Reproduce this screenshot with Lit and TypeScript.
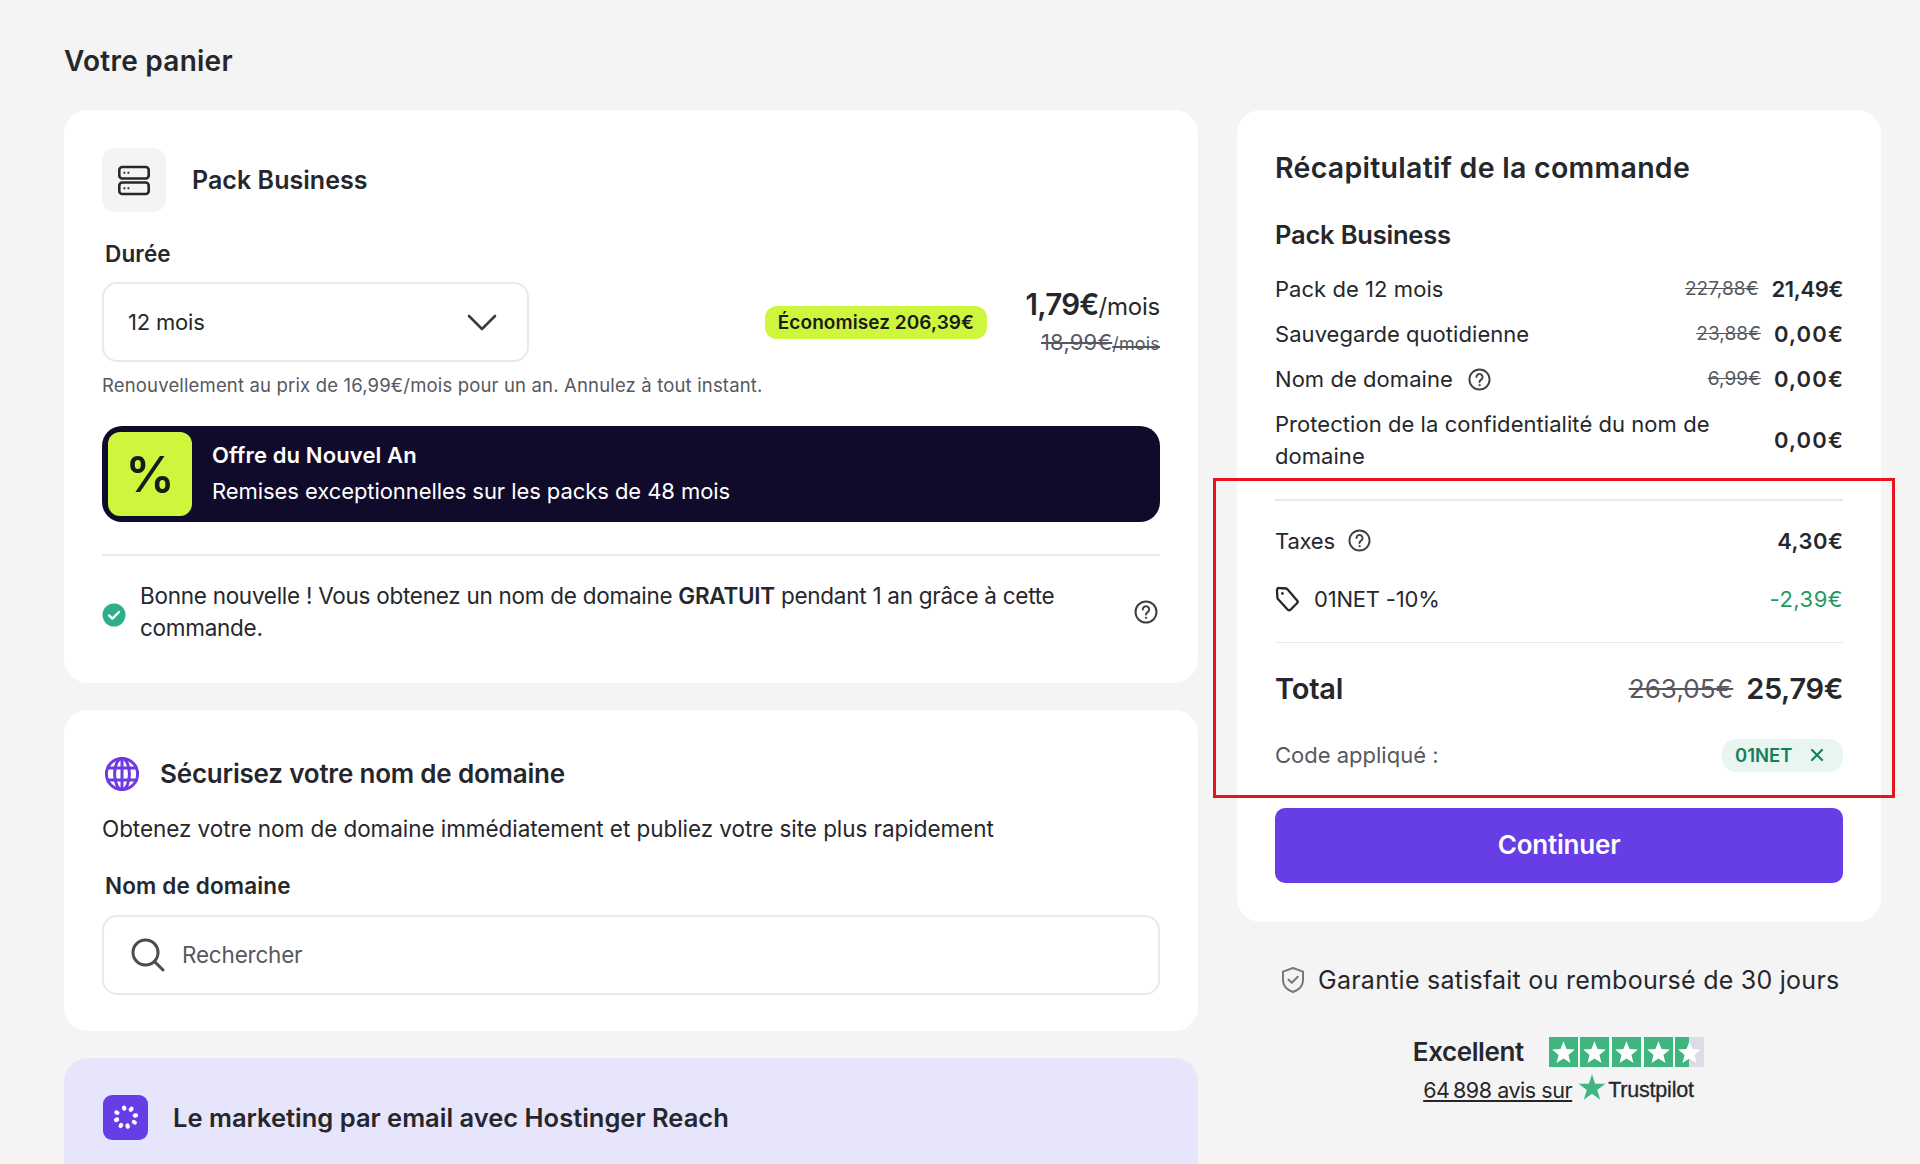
import { LitElement, html, css, svg } from "lit";
import { customElement } from "lit/decorators.js";

const help = (size: number) => html`<svg class="help" width=${size} height=${size} viewBox="0 0 24 24" fill="none" stroke="currentColor" stroke-width="2" stroke-linecap="round">
  <circle cx="12" cy="12" r="10.5"></circle>
  <path d="M8.8 9.4a3.2 3.2 0 1 1 4.9 2.7c-1 .7-1.7 1.2-1.7 2.5"></path>
  <circle cx="12" cy="17.8" r=".7" fill="currentColor" stroke-width="1"></circle>
</svg>`;

const star = svg`<path d="M12 3.2l2.5 6.4 6.9.4-5.3 4.4 1.7 6.7-5.8-3.7-5.8 3.7 1.7-6.7L2.6 10l6.9-.4z" fill="#fff"></path>`;

@customElement("app-root")
export class AppRoot extends LitElement {
  static styles = css`
    :host {
      display: block;
      position: relative;
      height: 1164px;
      overflow: hidden;
      background: #f4f4f4;
      color: #26272c;
      font-family: Inter, "Noto Sans", sans-serif;
      letter-spacing: -0.2px;
    }
    h1 {
      margin: 0;
      padding: 44px 0 0 64px;
      height: 110px;
      box-sizing: border-box;
      font-size: 28px;
      line-height: 34px;
      font-weight: 600;
      letter-spacing: 0.25px;
    }
    .page {
      display: grid;
      grid-template-columns: 1134px 644px;
      column-gap: 39px;
      padding-left: 64px;
    }
    .left {
      display: flex;
      flex-direction: column;
      gap: 27px;
    }
    .card {
      background: #fff;
      border-radius: 24px;
      padding: 38px;
    }
    .card.domain {
      padding-bottom: 36px;
    }
    .pack-head {
      display: flex;
      align-items: center;
      gap: 26px;
      font-size: 25px;
      font-weight: 600;
      letter-spacing: 0.05px;
    }
    .pack-ico {
      width: 64px;
      height: 64px;
      border-radius: 13px;
      background: #f4f4f4;
      display: flex;
      align-items: center;
      justify-content: center;
    }
    .label {
      margin-left: 3px;
      font-size: 22.5px;
      line-height: 28px;
      font-weight: 600;
      letter-spacing: 0.15px;
    }
    .dur {
      margin-top: 28px;
    }
    .dur-row {
      display: flex;
      align-items: center;
      margin-top: 14px;
    }
    .select {
      width: 427px;
      height: 80px;
      box-sizing: border-box;
      border: 2px solid #e9e9ed;
      border-radius: 15px;
      display: flex;
      align-items: center;
      justify-content: space-between;
      padding: 0 30px 0 24px;
      font-size: 22px;
    }
    .badge {
      margin-left: auto;
      height: 33px;
      line-height: 33px;
      padding: 0 13px;
      border-radius: 12px;
      background: #cdf63c;
      font-size: 19px;
      font-weight: 600;
      letter-spacing: 0.07px;
      color: #1a1b1f;
    }
    .price {
      margin-left: 38px;
      width: 135px;
      text-align: right;
      white-space: nowrap;
    }
    .now {
      font-size: 24px;
      line-height: 36px;
    }
    .now b {
      font-size: 29.5px;
      font-weight: 600;
      letter-spacing: -0.8px;
    }
    .was {
      margin-top: 4px;
      margin-bottom: 2px;
      font-size: 22px;
      line-height: 26px;
      letter-spacing: 0.17px;
      color: #56585f;
      text-decoration: line-through;
    }
    .was small {
      font-size: 18px;
    }
    .renew {
      margin-top: 10px;
      font-size: 18.5px;
      line-height: 26px;
      letter-spacing: 0.16px;
      color: #56585f;
    }
    .promo {
      margin-top: 28px;
      height: 96px;
      box-sizing: border-box;
      padding: 6px;
      background: #100b2b;
      border-radius: 20px;
      display: flex;
      align-items: center;
      gap: 20px;
      color: #fff;
    }
    .pct {
      width: 84px;
      height: 84px;
      border-radius: 12px;
      background: #cdf63c;
      color: #1a1b1f;
      display: flex;
      align-items: center;
      justify-content: center;
      font-size: 49px;
      font-weight: 600;
    }
    .promo-t {
      padding-bottom: 2px;
      font-size: 22px;
      line-height: 36px;
      letter-spacing: -0.07px;
    }
    .promo-t b {
      display: block;
      font-weight: 600;
      letter-spacing: 0.13px;
    }
    .promo-t span {
      display: block;
    }
    .rule {
      height: 1.5px;
      background: #e9e9ed;
    }
    .card > .rule {
      margin-top: 32px;
    }
    .news {
      display: flex;
      align-items: center;
      margin-top: 24px;
      margin-bottom: 1px;
      font-size: 22.5px;
      line-height: 32px;
      letter-spacing: -0.27px;
    }
    .news p {
      margin: 0 0 0 14px;
      width: 950px;
    }
    .news b {
      font-weight: 600;
    }
    .news .ok {
      flex: none;
      margin-top: 6px;
    }
    .news .help {
      margin-left: auto;
      margin-top: 0;
      margin-right: 2px;
    }
    .dom-head {
      display: flex;
      align-items: center;
      gap: 20px;
      font-size: 26px;
      font-weight: 600;
      line-height: 34px;
      margin-top: 8px;
      margin-left: 2px;
    }
    .desc {
      margin: 22px 0 0;
      font-size: 22.5px;
      line-height: 30px;
      letter-spacing: -0.06px;
    }
    .dom-label {
      margin-top: 28px;
    }
    .search {
      margin-top: 15px;
      height: 80px;
      box-sizing: border-box;
      border: 2px solid #e9e9ed;
      border-radius: 15px;
      display: flex;
      align-items: center;
      gap: 17px;
      padding-left: 27px;
      font-size: 22.5px;
      color: #56585f;
    }
    .reach {
      background: #e6e5fb;
      height: 200px;
      padding-top: 37px;
      box-sizing: border-box;
      display: flex;
      align-items: flex-start;
      gap: 25px;
      font-size: 25.5px;
      font-weight: 600;
      line-height: 45px;
      letter-spacing: 0;
    }
    .reach-ico {
      width: 45px;
      height: 45px;
      margin-left: 1px;
      border-radius: 9px;
      background: #673de6;
      display: flex;
      align-items: center;
      justify-content: center;
    }
    .summary {
      padding-top: 39px;
      padding-bottom: 39px;
    }
    h2 {
      margin: 0;
      font-size: 28.5px;
      line-height: 38px;
      font-weight: 600;
      letter-spacing: 0.28px;
    }
    h3 {
      margin: 31px 0 0;
      font-size: 25.5px;
      line-height: 34px;
      font-weight: 600;
    }
    .rows {
      margin-top: 21px;
      display: flex;
      flex-direction: column;
      gap: 13px;
      font-size: 22px;
      line-height: 32px;
      letter-spacing: 0.05px;
    }
    .row {
      display: flex;
      align-items: center;
      justify-content: space-between;
    }
    .row .name {
      display: flex;
      align-items: center;
      gap: 15px;
    }
    .row .val {
      display: flex;
      align-items: center;
      gap: 13px;
      font-weight: 600;
      letter-spacing: -0.35px;
    }
    .val .zero {
      letter-spacing: 1.2px;
      margin-right: -1.2px;
    }
    .val .tax {
      letter-spacing: 0.5px;
      margin-right: -0.5px;
    }
    .old {
      font-size: 19px;
      font-weight: 400;
      letter-spacing: 0.1px;
      color: #56585f;
      text-decoration: line-through;
    }
    .wrap {
      width: 500px;
    }
    .help {
      flex: none;
      color: #3f4046;
    }
    .summary > .rule {
      margin-top: 27px;
    }
    .taxes {
      margin-top: 24px;
      font-size: 22px;
      line-height: 32px;
    }
    .taxes .name {
      gap: 13px;
    }
    .coupon {
      margin-top: 26px;
      font-size: 22px;
      line-height: 32px;
    }
    .coupon .name {
      gap: 14px;
    }
    .green {
      color: #1f9a63;
      letter-spacing: 0.5px;
    }
    .summary > .total-rule {
      margin-top: 27px;
    }
    .total {
      margin-top: 26px;
      font-size: 29px;
      line-height: 40px;
      font-weight: 600;
    }
    .total .old {
      font-size: 26px;
    }
    .code {
      margin-top: 29px;
      font-size: 22px;
      color: #56585f;
      line-height: 34px;
      letter-spacing: 0px;
    }
    .chip {
      height: 33px;
      width: 121px;
      box-sizing: border-box;
      padding: 0 19px 0 13px;
      border-radius: 14px;
      background: #e8f5f0;
      color: #15805a;
      display: flex;
      align-items: center;
      justify-content: space-between;
      font-size: 18.5px;
      font-weight: 600;
    }
    .btn {
      margin-top: 36px;
      height: 75px;
      padding-bottom: 2px;
      box-sizing: border-box;
      border-radius: 10px;
      background: #673de6;
      color: #fff;
      display: flex;
      align-items: center;
      justify-content: center;
      font-size: 26px;
      font-weight: 600;
    }
    .guarantee {
      display: flex;
      align-items: center;
      gap: 13px;
      margin: 41px 0 0 44px;
      font-size: 25px;
      line-height: 34px;
      letter-spacing: 0.25px;
      white-space: nowrap;
    }
    .tp {
      display: flex;
      flex-direction: column;
      align-items: center;
      margin-top: 37px;
    }
    .tp-top {
      display: flex;
      align-items: center;
      gap: 25px;
      font-size: 26px;
      font-weight: 600;
      line-height: 36px;
      letter-spacing: -0.4px;
      margin-left: -1px;
    }
    .stars {
      display: flex;
      gap: 2.6px;
    }
    .st {
      width: 29px;
      height: 30px;
      background: #3fb57f;
      display: block;
    }
    .st.half {
      background: linear-gradient(90deg, #3fb57f 50%, #dcdce6 50%);
    }
    .tp-bot {
      display: flex;
      align-items: center;
      margin-top: 5px;
      margin-left: -1px;
      line-height: 30px;
    }
    .tp-bot u {
      font-size: 21.5px;
      letter-spacing: -0.45px;
    }
    .tp-bot span {
      font-family: "Liberation Sans", Arial, sans-serif;
      font-size: 21.5px;
      letter-spacing: -0.2px;
      -webkit-text-stroke: 0.3px #26272c;
    }
    .tp-bot svg {
      margin: -6px 2px 0 6px;
    }
    .mark {
      position: absolute;
      left: 1213px;
      top: 478px;
      width: 682px;
      height: 320px;
      box-sizing: border-box;
      border: 3px solid #e8141c;
    }
  `;

  protected render() {
    return html`
      <h1>Votre panier</h1>
      <div class="page">
        <div class="left">
          <section class="card">
            <div class="pack-head">
              <div class="pack-ico">
                <svg width="32" height="32" viewBox="0 0 32 32" fill="none" stroke="#26272c" stroke-width="2.6">
                  <rect x="1.300" y="3" width="29.400" height="11.500" rx="3"></rect>
                  <rect x="1.300" y="18.500" width="29.400" height="11.500" rx="3"></rect>
                  <path d="M5.500 8.700h1.800M9.500 8.700h1.800M5.500 24.200h1.800M9.500 24.200h1.800" stroke-width="2"></path>
                </svg>
              </div>
              Pack Business
            </div>
            <div class="label dur">Durée</div>
            <div class="dur-row">
              <div class="select">
                12 mois
                <svg width="30" height="17" viewBox="0 0 30 17" fill="none" stroke="#3a3b41" stroke-width="2.6" stroke-linecap="round" stroke-linejoin="round"><path d="M2 2l13 13L28 2"></path></svg>
              </div>
              <div class="badge">Économisez 206,39€</div>
              <div class="price">
                <div class="now"><b>1,79€</b>/mois</div>
                <div class="was">18,99€<small>/mois</small></div>
              </div>
            </div>
            <div class="renew">Renouvellement au prix de 16,99€/mois pour un an. Annulez à tout instant.</div>
            <div class="promo">
              <div class="pct">%</div>
              <div class="promo-t"><b>Offre du Nouvel An</b><span>Remises exceptionnelles sur les packs de 48 mois</span></div>
            </div>
            <div class="rule"></div>
            <div class="news">
              <svg class="ok" width="24" height="24" viewBox="0 0 24 24">
                <circle cx="12" cy="12" r="11.500" fill="#2fae8a"></circle>
                <path d="M7 12.400l3.400 3.200L17 9" fill="none" stroke="#fff" stroke-width="2.400" stroke-linecap="round" stroke-linejoin="round"></path>
              </svg>
              <p>Bonne nouvelle ! Vous obtenez un nom de domaine <b>GRATUIT</b> pendant 1 an grâce à cette<br />commande.</p>
              ${help(24)}
            </div>
          </section>
          <section class="card domain">
            <div class="dom-head">
              <svg width="36" height="36" viewBox="0 0 36 36" fill="none" stroke="#6d3be0" stroke-width="3">
                <circle cx="18" cy="18" r="15.600"></circle>
                <ellipse cx="18" cy="18" rx="7.400" ry="15.600"></ellipse>
                <path d="M18 2.400v31.200M4 12h28M4 24h28"></path>
              </svg>
              Sécurisez votre nom de domaine
            </div>
            <p class="desc">Obtenez votre nom de domaine immédiatement et publiez votre site plus rapidement</p>
            <div class="label dom-label">Nom de domaine</div>
            <div class="search">
              <svg width="34" height="34" viewBox="0 0 34 34" fill="none" stroke="#4b4c52" stroke-width="3" stroke-linecap="round">
                <circle cx="14.500" cy="14.500" r="12.500"></circle>
                <path d="M23.600 23.600l8.400 8.400"></path>
              </svg>
              Rechercher
            </div>
          </section>
          <section class="card reach">
            <div class="reach-ico">
              <svg width="26" height="26" viewBox="0 0 26 26" fill="none" stroke="#fff" stroke-width="4.200" stroke-linecap="round">
                <path d="M11 3.600l.4 1M18.600 4.800l-.9.9M23 11.400l-1.200.2M21.800 18.600l-1-.7M14.800 22.600l-.3-1.100M7.600 22l.6-1M3 16l1.100-.5M3.400 8.400l1 .5"></path>
              </svg>
            </div>
            Le marketing par email avec Hostinger Reach
          </section>
        </div>
        <div class="right">
          <section class="card summary">
            <h2>Récapitulatif de la commande</h2>
            <h3>Pack Business</h3>
            <div class="rows">
              <div class="row"><div class="name">Pack de 12 mois</div><div class="val"><span class="old">227,88€</span>21,49€</div></div>
              <div class="row"><div class="name">Sauvegarde quotidienne</div><div class="val"><span class="old">23,88€</span><span class="zero">0,00€</span></div></div>
              <div class="row"><div class="name">Nom de domaine ${help(23)}</div><div class="val"><span class="old">6,99€</span><span class="zero">0,00€</span></div></div>
              <div class="row"><div class="name wrap">Protection de la confidentialité du nom de domaine</div><div class="val"><span class="zero">0,00€</span></div></div>
            </div>
            <div class="rule"></div>
            <div class="row taxes"><div class="name">Taxes ${help(23)}</div><div class="val"><span class="tax">4,30€</span></div></div>
            <div class="row coupon">
              <div class="name">
                <svg width="25" height="26" viewBox="0 0 25 26" fill="none" stroke="#26272c" stroke-width="2.300" stroke-linejoin="round">
                  <path d="M2 4.200A2 2 0 0 1 4.200 2l6.800.5a2 2 0 0 1 1.200.6l9.900 11.300a2 2 0 0 1-.1 2.800l-6.500 6.500a2 2 0 0 1-2.900-.1L2.900 13a2 2 0 0 1-.5-1.200z"></path>
                  <circle cx="7.400" cy="7.400" r="1" fill="#26272c" stroke-width="1"></circle>
                </svg>
                01NET -10%
              </div>
              <div class="green">-2,39€</div>
            </div>
            <div class="rule total-rule"></div>
            <div class="row total"><div class="name">Total</div><div class="val"><span class="old">263,05€</span>25,79€</div></div>
            <div class="row code">
              <div class="name">Code appliqué :</div>
              <div class="chip">01NET
                <svg width="14" height="14" viewBox="0 0 14 14" stroke="#15805a" stroke-width="2.200" stroke-linecap="round"><path d="M2 2l10 10M12 2L2 12"></path></svg>
              </div>
            </div>
            <div class="btn">Continuer</div>
          </section>
          <div class="guarantee">
            <svg width="24" height="28" viewBox="0 0 24 28" fill="none" stroke="#77787e" stroke-width="2" stroke-linejoin="round" stroke-linecap="round">
              <path d="M12 2l10 3.600v8.600c0 5.600-4.200 9.600-10 11.800C6.200 23.800 2 19.800 2 14.200V5.600z"></path>
              <path d="M7.500 13.500l3.300 3.200 6-6"></path>
            </svg>
            Garantie satisfait ou remboursé de 30 jours
          </div>
          <div class="tp">
            <div class="tp-top">
              Excellent
              <div class="stars">
                ${[0, 1, 2, 3, 4].map(
                  (i) => html`<svg class="st ${i === 4 ? "half" : ""}" viewBox="0 0 24 24">${star}</svg>`
                )}
              </div>
            </div>
            <div class="tp-bot">
              <u>64\u202f898 avis sur</u>
              <svg width="28" height="28" viewBox="0 0 24 24"><path d="M12 1l2.700 8.300h8.800l-7.100 5.200 2.700 8.400-7.100-5.200-7.100 5.200 2.700-8.400L.5 9.300h8.800z" fill="#3fb57f"></path></svg>
              <span>Trustpilot</span>
            </div>
          </div>
        </div>
      </div>
      <div class="mark"></div>
    `;
  }
}

declare global {
  interface HTMLElementTagNameMap {
    "app-root": AppRoot;
  }
}
